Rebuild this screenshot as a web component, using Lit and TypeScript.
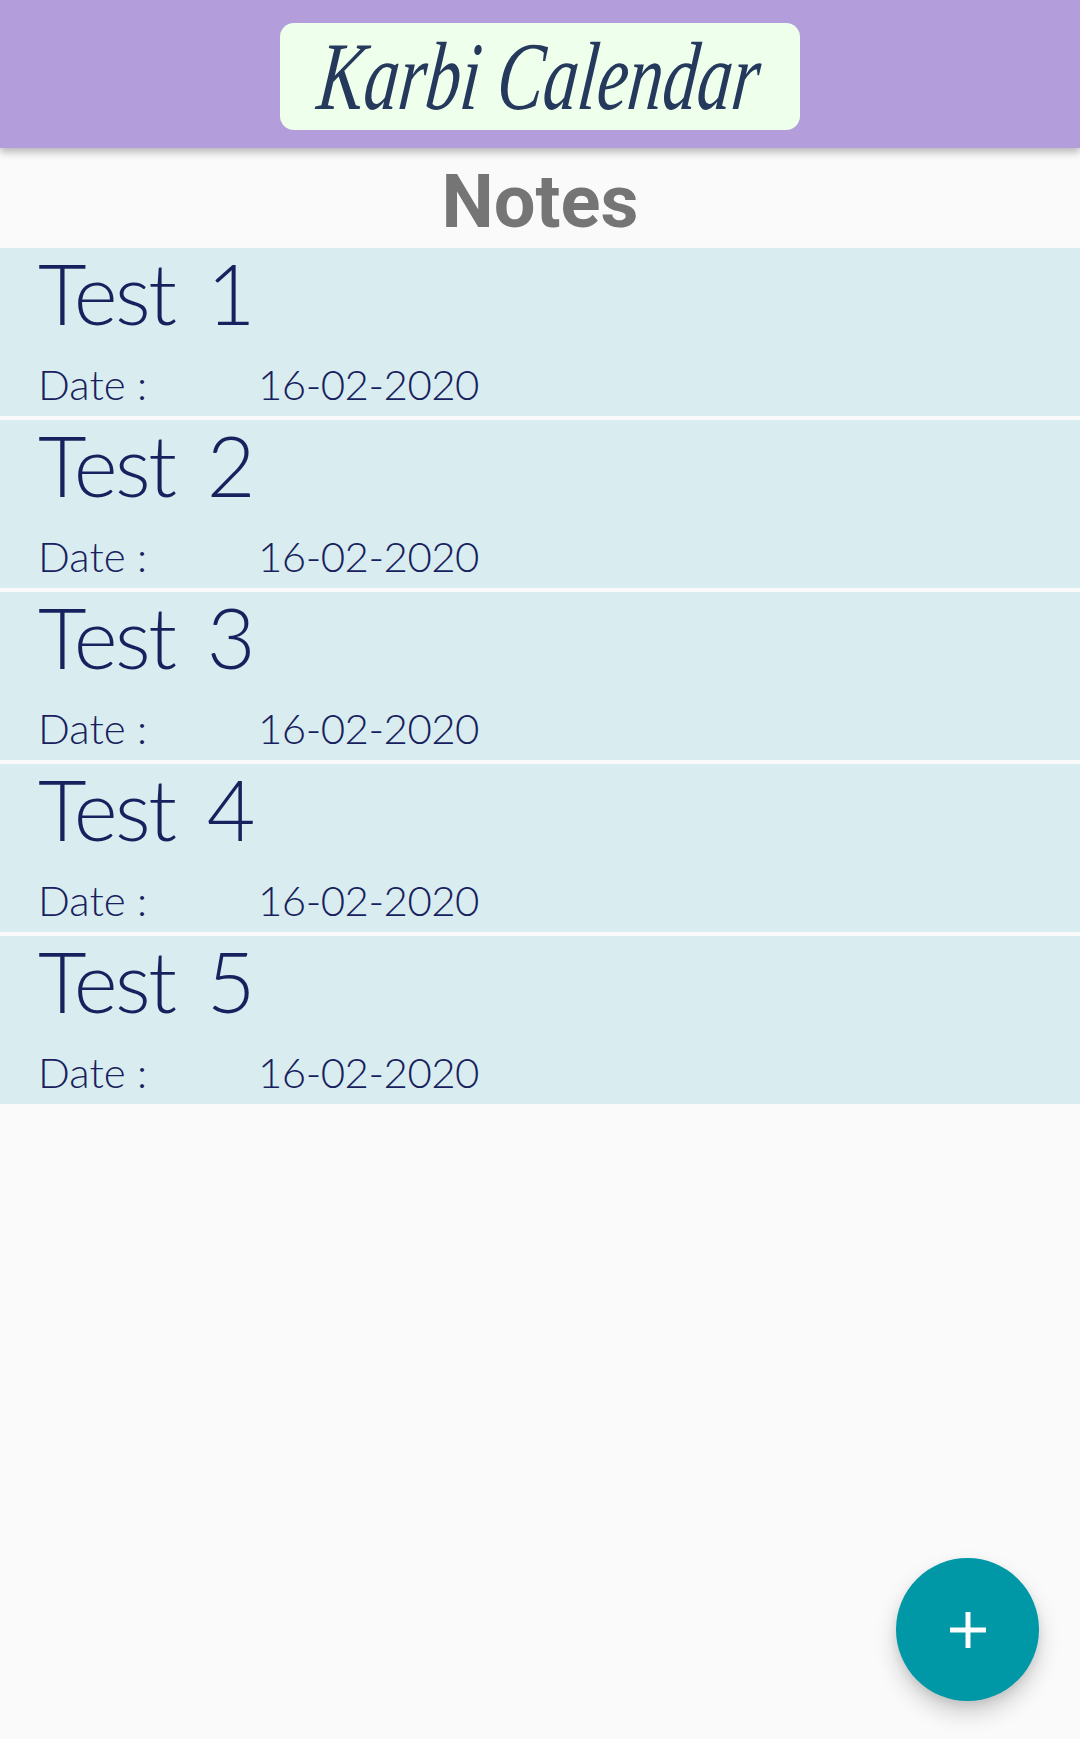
import { LitElement, html, css } from "lit";
import { customElement } from "lit/decorators.js";

const NOTES = ["Test 1", "Test 2", "Test 3", "Test 4", "Test 5"];

@customElement("app-root")
export class AppRoot extends LitElement {
  static styles = css`
    :host {
      display: block;
      position: relative;
      width: 1080px;
      height: 1739px;
      overflow: hidden;
      background: #fafafa;
      font-family: "Lato", "Liberation Sans", sans-serif;
    }
    .bar {
      height: 148px;
      background: #b39ddb;
      box-shadow: 0 4px 8px rgba(0, 0, 0, 0.28);
      display: flex;
      justify-content: center;
      align-items: flex-start;
      padding-top: 23px;
      box-sizing: border-box;
      position: relative;
    }
    .logo {
      width: 520px;
      height: 107px;
      border-radius: 14px;
      background: #eeffec;
      display: flex;
      align-items: center;
      justify-content: center;
    }
    .logo span {
      font-family: "Liberation Serif", serif;
      font-style: italic;
      font-size: 97px;
      color: #25395c;
      white-space: nowrap;
      line-height: 1;
      display: inline-block;
      flex: none;
      transform: skewX(-6deg) scaleX(0.715);
    }
    h1 {
      margin: 0;
      height: 100px;
      font-family: Roboto, sans-serif;
      font-weight: 700;
      font-size: 74px;
      line-height: 108px;
      text-align: center;
      color: #757575;
    }
    .list {
      display: flex;
      flex-direction: column;
      gap: 4px;
    }
    .note {
      height: 168px;
      background: #d9ecef;
      padding-left: 38px;
      color: #17215e;
    }
    .title {
      height: 100px;
      font-size: 84px;
      font-weight: 300;
      line-height: 89px;
      letter-spacing: -2.5px;
      word-spacing: 12px;
      white-space: nowrap;
    }
    .date {
      display: flex;
      font-size: 42px;
      font-weight: 300;
      line-height: 68px;
      padding-top: 2px;
    }
    .date .label {
      width: 220px;
    }
    .date .value {
      letter-spacing: -0.5px;
    }
    .fab {
      position: absolute;
      left: 896px;
      top: 1558px;
      width: 143px;
      height: 143px;
      border: 0;
      padding: 0;
      border-radius: 50%;
      background: #0097a7;
      box-shadow: 0 12px 22px rgba(0, 0, 0, 0.18), 0 4px 8px rgba(0, 0, 0, 0.08);
      display: flex;
      align-items: center;
      justify-content: center;
    }
    .fab svg {
      width: 36px;
      height: 36px;
      display: block;
    }
  `;

  render() {
    return html`
      <header class="bar">
        <div class="logo"><span>Karbi Calendar</span></div>
      </header>
      <h1>Notes</h1>
      <div class="list">
        ${NOTES.map(
          (n) => html`
            <div class="note">
              <div class="title">${n}</div>
              <div class="date">
                <span class="label">Date :</span>
                <span class="value">16-02-2020</span>
              </div>
            </div>
          `
        )}
      </div>
      <button class="fab" aria-label="Add">
        <svg viewBox="0 0 36 36"><path d="M15.5 0h5v15.5H36v5H20.5V36h-5V20.5H0v-5h15.5z" fill="#fff" /></svg>
      </button>
    `;
  }
}
